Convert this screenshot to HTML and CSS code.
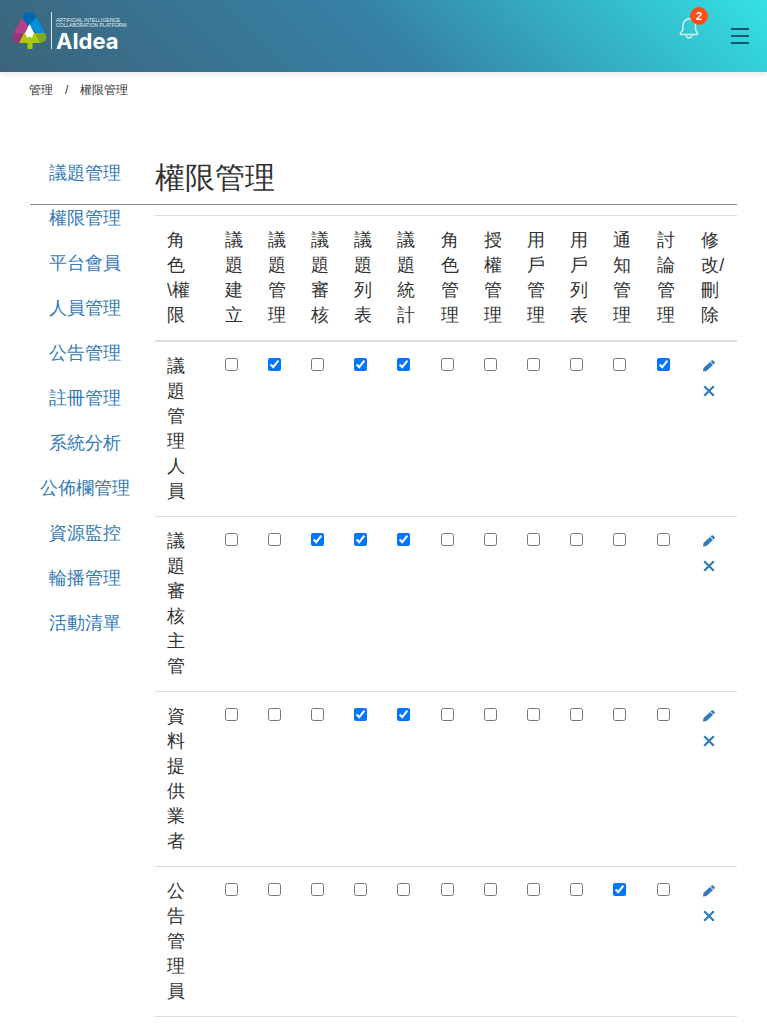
FILE: index.html
```
<!DOCTYPE html>
<html lang="zh-Hant">
<head>
<meta charset="utf-8">
<meta name="viewport" content="width=device-width, initial-scale=1">
<title>權限管理 - AIdea</title>
<link rel="stylesheet" href="styles.css">
</head>
<body>
<svg class="sprite" aria-hidden="true">
  <symbol id="pencil" viewBox="0 0 14 14"><path d="M1 12.500l.5-3.500L8 3l3 3-6.500 6z"/><path d="M8.600 2.400l1-.9q.9-.6 1.600 0l1.300 1.300q.6.800 0 1.600l-.9 1z"/></symbol>
  <symbol id="cross" viewBox="0 0 14 14"><path d="M2.200 2.200l9.600 9.600M11.800 2.200l-9.600 9.600" fill="none" stroke="currentColor" stroke-width="2.200"/></symbol>
</svg>
<header class="topbar">
  <a class="brand" href="#" aria-label="AIdea">
    <svg class="brand-mark" viewBox="0 0 35 37" aria-hidden="true">
      <path fill="#9b3577" d="M2.500 20H14v6l-4 5H7Q3 31 1.200 28 0 25 2.500 20z"/>
      <path fill="#b8408a" d="M10.500 4L17 13l-4.500 8H2z"/>
      <path fill="#0068ad" d="M10 6Q12 0 17.500 0T25 6l-7.500 10z"/>
      <path fill="#0090dc" d="M24.500 5L33 21h-9l-6.500-8z"/>
      <path fill="#80a817" d="M22 21h11q2.500 4 .5 7-2 3-5.500 3h-3z"/>
      <path fill="#a9c800" d="M12 21h11l5 10h-7.500v6h-5v-6H7z"/>
      <path fill="#fff" d="M17.500 12l4.500 9-2 5-2.500-1.500L15 26l-2-5z"/>
    </svg>
    <svg class="brand-name" viewBox="0 0 76 40" aria-hidden="true">
      <path stroke="#d8e5eb" d="M2.500 0v37"/>
      <text class="tagline" x="7" y="10">ARTIFICIAL INTELLIGENCE</text>
      <text class="tagline" x="7" y="15">COLLABORATION PLATFORM</text>
      <text class="wordmark" x="7" y="37">AIdea</text>
    </svg>
  </a>
  <div class="tools">
    <button class="bell" type="button" aria-label="通知">
      <svg viewBox="0 0 20 22" width="20" height="22" fill="none" stroke="#d4eeee" stroke-width="1.500" aria-hidden="true"><path d="M1.500 17.500h17v-1.500l-2-3V8q-1-5-6.500-6.500Q4.500 3 4 8v5l-2.500 3zM7 18q.5 3 3 3t3-3"/></svg>
      <span class="count">2</span>
    </button>
    <button class="menu" type="button" aria-label="選單"><span></span><span></span><span></span></button>
  </div>
</header>
<nav class="crumbs" aria-label="路徑"><a href="#">管理</a><span>/</span><a href="#">權限管理</a></nav>
<main class="page">
  <nav class="side">
    <a href="#">議題管理</a><a href="#">權限管理</a><a href="#">平台會員</a><a href="#">人員管理</a><a href="#">公告管理</a><a href="#">註冊管理</a><a href="#">系統分析</a><a href="#">公佈欄管理</a><a href="#">資源監控</a><a href="#">輪播管理</a><a href="#">活動清單</a>
  </nav>
  <h1>權限管理</h1>
  <div class="content">
    <table>
      <colgroup><col class="c-role"><col class="c-perm" span="9"><col class="c-wide" span="2"><col></colgroup>
      <thead><tr><th>角色<wbr>\權限</th><th>議題建立</th><th>議題管理</th><th>議題審核</th><th>議題列表</th><th>議題統計</th><th>角色管理</th><th>授權管理</th><th>用戶管理</th><th>用戶列表</th><th>通知管理</th><th>討論管理</th><th>修改/刪除</th></tr></thead>
      <tbody id="roles"></tbody>
    </table>
  </div>
</main>
<script src="app.js"></script>
</body>
</html>
```
FILE: styles.css
```
* { box-sizing: border-box; }
body {
  margin: 0;
  color: #333;
  background: #fff;
  font-family: "Liberation Sans", sans-serif;
  font-size: 18px;
  font-weight: 400;
  line-height: 25px;
}
a { color: #337ab7; text-decoration: none; }
button { padding: 0; border: 0; background: none; cursor: pointer; }
.sprite { position: absolute; width: 0; height: 0; }
.topbar {
  display: flex;
  justify-content: space-between;
  height: 72px;
  padding: 0 18px 0 12px;
  background: linear-gradient(45deg, #3c647b 0%, #3680a5 50%, #33e1e3 100%);
  box-shadow: 0 2px 6px rgba(0, 0, 0, .1);
}
.brand { display: flex; gap: 2px; padding-top: 12px; }
.brand-mark { width: 35px; height: 37px; }
.brand-name { width: 76px; height: 40px; overflow: visible; fill: #fff; }
.tagline { font: 400 5px "Liberation Sans", sans-serif; fill: #e8f0f4; }
.wordmark { font: 700 22px Inter, sans-serif; }
.tools { display: flex; align-items: center; gap: 32px; }
.bell { position: relative; width: 20px; height: 22px; margin-bottom: 16px; }
.bell svg { display: block; }
.count {
  position: absolute;
  top: -10px;
  left: 11px;
  width: 18px;
  border-radius: 50%;
  background: #ff4f17;
  color: #fff;
  font: 700 11px/18px "Liberation Sans", sans-serif;
  text-align: center;
}
.menu { display: grid; gap: 5px; width: 18px; }
.menu span { height: 2px; background: #14566f; }
.crumbs {
  display: flex;
  gap: 12px;
  padding: 10px 29px 0;
  font-size: 12px;
  line-height: 16px;
}
.crumbs a { color: #333; }
.page { padding: 53px 30px 0; }
.side {
  display: flex;
  flex-direction: column;
  float: left;
  width: 110px;
  margin-right: 15px;
  text-align: center;
}
.side a { padding: 10px 0; }
h1 {
  margin: 0 0 10px;
  padding: 10px 0 9px;
  border-bottom: 1px solid #888;
  font-size: 30px;
  font-weight: 400;
  line-height: 34px;
}
.content { overflow: hidden; }
table {
  width: 100%;
  table-layout: fixed;
  border-collapse: collapse;
  border-bottom: 1px solid #ddd;
}
.c-role { width: 10%; }
.c-perm { width: 7.4%; }
.c-wide { width: 7.6%; }
th, td {
  padding: 12px;
  border-top: 1px solid #ddd;
  font-weight: 400;
  text-align: left;
  vertical-align: top;
}
thead th { border-bottom: 2px solid #ddd; }
input { display: block; width: 13px; height: 13px; margin: 4px 0 0; }
td a { display: flex; align-items: flex-start; height: 25px; padding: 5px 0 0 1px; }
td svg { width: 14px; height: 14px; fill: currentColor; }
```
FILE: app.js
```
const permissions = ["議題建立", "議題管理", "議題審核", "議題列表", "議題統計", "角色管理", "授權管理", "用戶管理", "用戶列表", "通知管理", "討論管理"];
const roles = [
  ["議題管理人員", [1, 3, 4, 10]],
  ["議題審核主管", [2, 3, 4]],
  ["資料提供業者", [3, 4]],
  ["公告管理員", [9]]
];
document.getElementById("roles").innerHTML = roles.map(([name, granted]) =>
  `<tr><td>${name}</td>` +
  permissions.map((p, i) => `<td><input type="checkbox" aria-label="${name} ${p}"${granted.includes(i) ? " checked" : ""}></td>`).join("") +
  `<td><a href="#" aria-label="修改"><svg><use href="#pencil"/></svg></a><a href="#" aria-label="刪除"><svg><use href="#cross"/></svg></a></td></tr>`
).join("");
```
